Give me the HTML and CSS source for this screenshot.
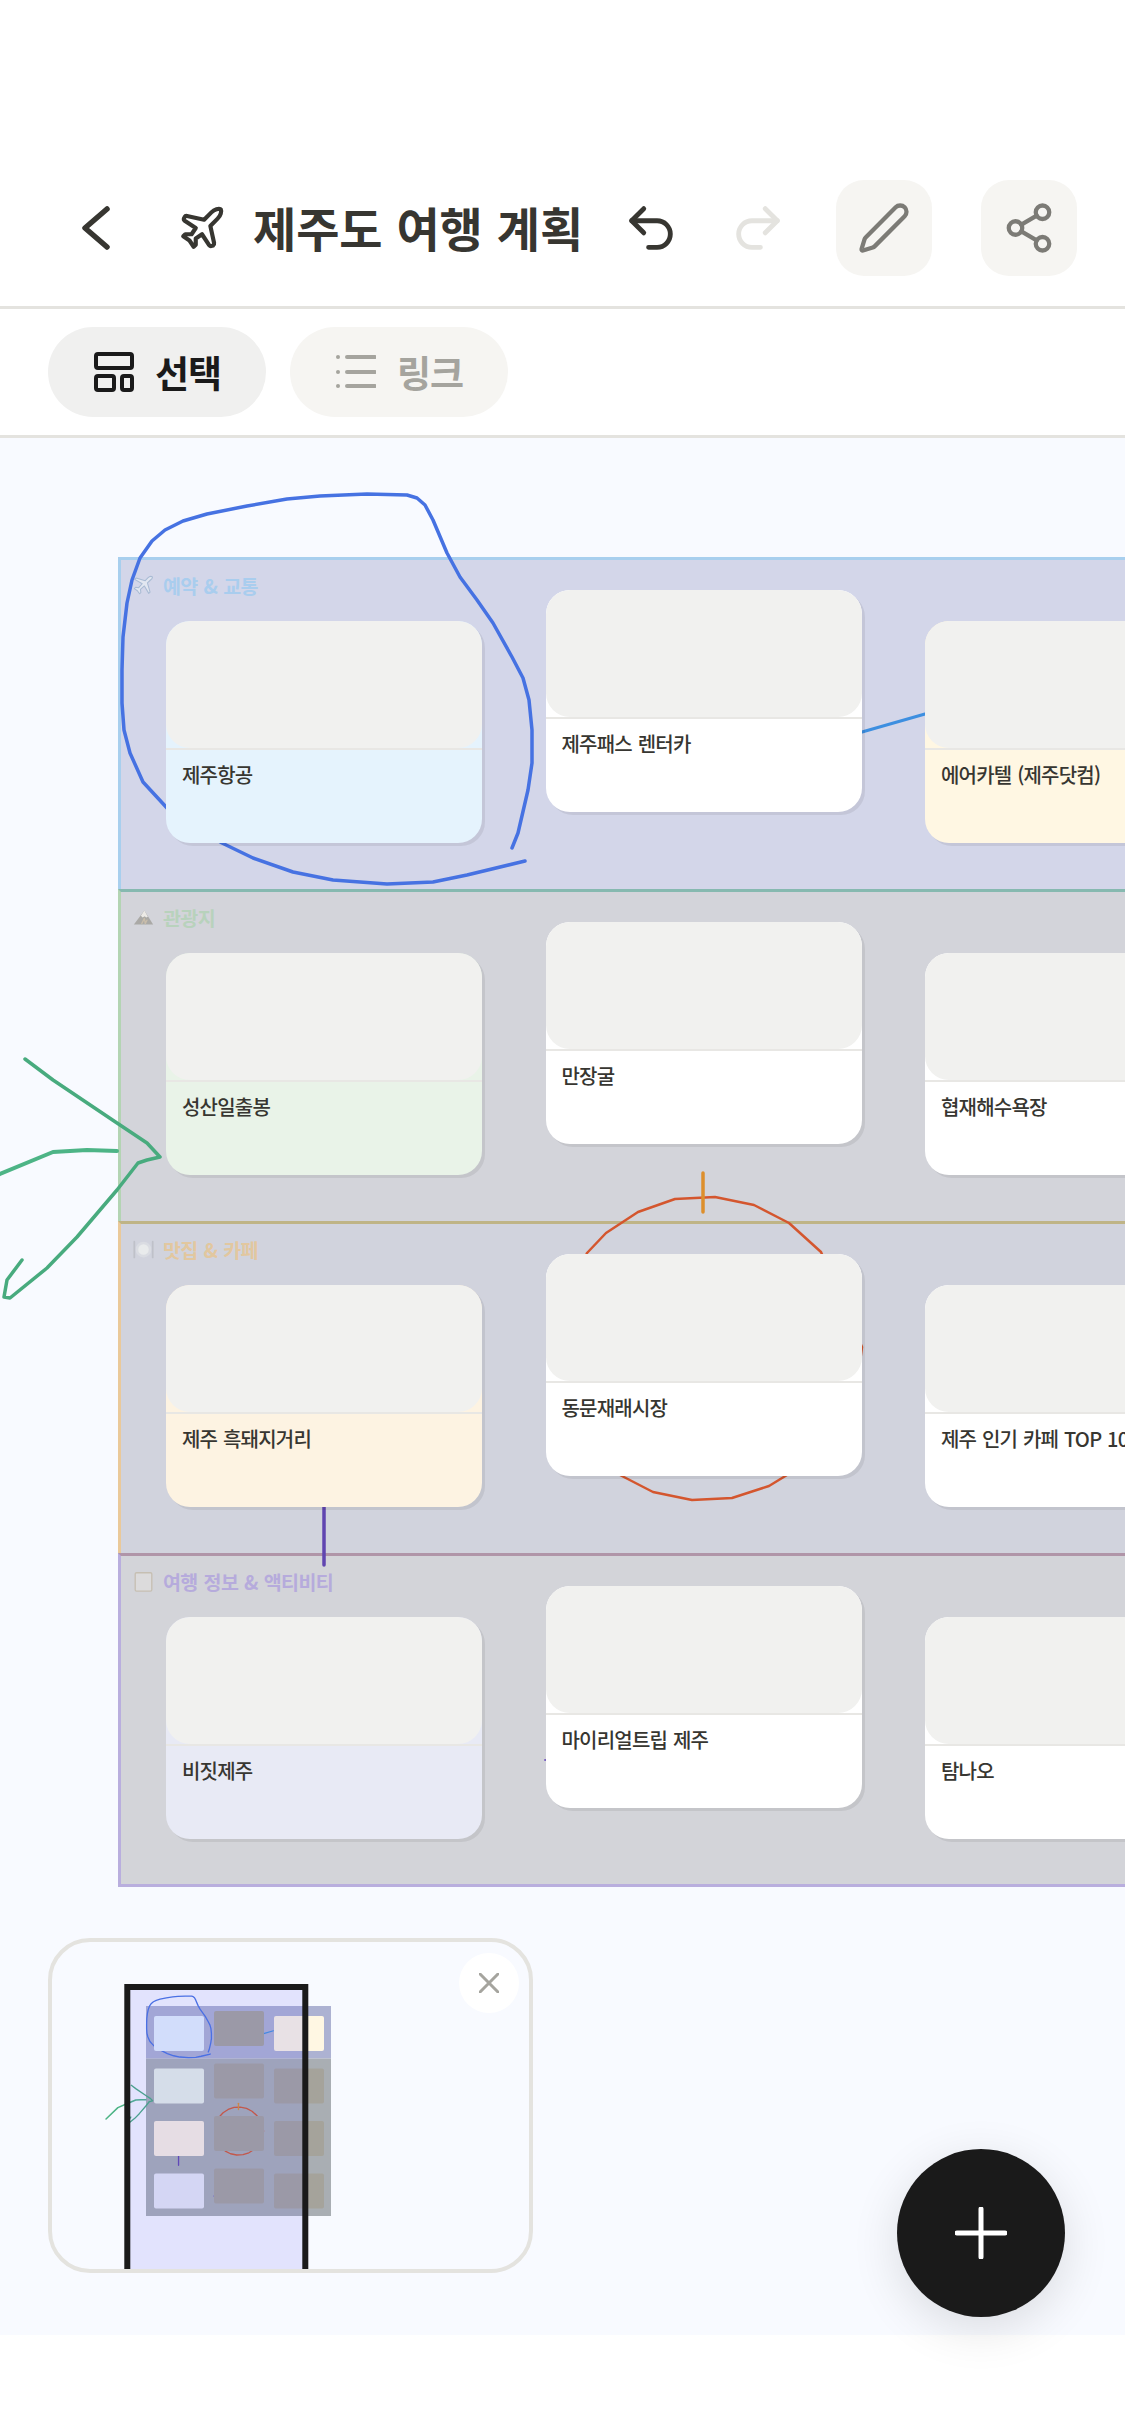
FILE: index.html
```html
<!DOCTYPE html>
<html lang="ko">
<head>
    <meta charset="UTF-8">
    <meta name="viewport" content="width=device-width, initial-scale=1.0">
    <title>제주도 여행 계획</title>
    <link rel="stylesheet" href="styles.css">
</head>
<body>
    <div class="page">
        <header class="topbar">
            <svg class="icon-back" viewBox="0 0 46 58"><path d="M34 10 12 29l22 19"/></svg>
            <svg class="icon-plane" viewBox="0 0 24 24"><path d="M17.8 19.2 16 11l3.5-3.5C21 6 21.5 4 21 3c-1-.5-3 0-4.5 1.5L13 8 4.8 6.2c-.5-.1-.9.1-1.1.5l-.3.5c-.2.5-.1 1 .3 1.3L9 12l-2 3H4l-1 1 3 2 2 3 1-1v-3l3-2 3.5 5.3c.3.4.8.5 1.3.3l.5-.2c.4-.3.6-.7.5-1.2z"/></svg>
            <h1 class="title">제주도 여행 계획</h1>
            <div class="topbar-actions">
                <svg class="icon-history" viewBox="0 0 24 24"><path d="M9 14 4 9l5-5"/><path d="M4 9h10.5a5.5 5.5 0 0 1 0 11H11"/></svg>
                <svg class="icon-history is-off" viewBox="0 0 24 24"><path d="m15 14 5-5-5-5"/><path d="M20 9H9.5a5.5 5.5 0 0 0 0 11H13"/></svg>
                <button class="square-btn">
                    <svg viewBox="0 0 24 24"><path d="M21.174 6.812a1 1 0 0 0-3.986-3.987L3.842 16.174a2 2 0 0 0-.5.83l-1.321 4.352a.5.5 0 0 0 .623.622l4.353-1.32a2 2 0 0 0 .83-.497z"/></svg>
                </button>
                <button class="square-btn">
                    <svg viewBox="0 0 24 24"><circle cx="18" cy="5" r="3"/><circle cx="6" cy="12" r="3"/><circle cx="18" cy="19" r="3"/><path d="M8.59 13.51 15.42 17.49"/><path d="M15.41 6.51 8.59 10.49"/></svg>
                </button>
            </div>
        </header>

        <nav class="tabs">
            <button class="tab is-active">
                <svg viewBox="0 0 24 24"><rect x="3" y="3" width="18" height="7" rx="1"/><rect x="3" y="14" width="9" height="7" rx="1"/><rect x="16" y="14" width="5" height="7" rx="1"/></svg>
                선택
            </button>
            <button class="tab">
                <svg viewBox="0 0 40 40"><path class="list-lines" d="M11 5h28M11 20h28M11 34h28"/><circle cx="2" cy="5" r="2"/><circle cx="2" cy="20" r="2"/><circle cx="2" cy="34" r="2"/></svg>
                링크
            </button>
        </nav>

        <main class="canvas">
            <!-- hand drawn strokes, page coordinates -->
            <svg class="ink" viewBox="0 438 1125 1897">
                <g id="ink-strokes">
                    <polyline class="stroke-link" points="862,732 925,714"/>
                    <polyline class="stroke-purple" points="324,1507 324,1565"/>
                    <polyline class="stroke-purple-thin" points="545,1760 860,1760"/>
                    <polyline class="stroke-blue" points="512,848 518,833 528,790 532,763 532,730 529,700 523,678 512,657 493,623 477,600 460,577 447,553 433,520 425,505 417,498 407,495 367,494 320,496 287,499 247,506 207,514 183,521 165,530 152,541 140,558 132,580 127,603 123,637 122,670 122,703 124,730 130,753 143,782 155,795 167,808 222,843 253,858 293,872 333,880 387,884 433,882 467,875 525,861"/>
                    <polygon class="stroke-red" points="675,1199 715,1197 754,1205 789,1223 821,1252 862,1347 855,1400 787,1475 769,1486 732,1498 692,1500 653,1492 620,1475 570,1400 560,1320 587,1253 606,1233 638,1212"/>
                    <polyline class="stroke-orange" points="703,1173 703,1212"/>
                    <polyline class="stroke-green" points="25,1059 53,1080 117,1123 147,1143 160,1157 147,1160 138,1163 117,1190 77,1237 47,1268 10,1298 4,1297 7,1280 22,1260"/>
                    <polyline class="stroke-green-wide" points="-135,1272 -60,1200 0,1174 53,1152 87,1150 117,1151"/>
                </g>
            </svg>

            <div class="board">
                <section class="group group-blue">
                    <div class="group-label">
                        <svg viewBox="0 0 24 24"><path class="emoji-plane" d="M22 2c-1.500-.8-3.500-.2-5 1.300L14 6.500 3.500 3.500 2 5l8.500 5-4 4.500-3.500-.5L1.500 15.500 5 18l2.500 3.500L9 20l-.5-3.500 4.500-4 5 8.500 1.500-1.500-3-10.500 3.200-3C21.200 5 22.800 3.500 22 2z"/></svg>
                        예약 &amp; 교통
                    </div>
                    <article class="card card-sky"><div class="card-thumb"></div><div class="card-name">제주항공</div></article>
                    <article class="card card-raised"><div class="card-thumb"></div><div class="card-name">제주패스 렌터카</div></article>
                    <article class="card card-cream"><div class="card-thumb"></div><div class="card-name">에어카텔 (제주닷컴)</div></article>
                </section>

                <section class="group group-green">
                    <div class="group-label">
                        <svg viewBox="0 0 24 24"><path class="emoji-rock" d="M1 20 13 4l10 16z"/><path class="emoji-snow" d="M9 10l4-6 4 7-2 1-1.500-1.500L11 12z"/><path class="emoji-crack" d="M10 19l3-6 1 6 2-4"/></svg>
                        관광지
                    </div>
                    <article class="card card-mint"><div class="card-thumb"></div><div class="card-name">성산일출봉</div></article>
                    <article class="card card-raised"><div class="card-thumb"></div><div class="card-name">만장굴</div></article>
                    <article class="card"><div class="card-thumb"></div><div class="card-name">협재해수욕장</div></article>
                </section>

                <section class="group group-orange">
                    <div class="group-label">
                        <svg viewBox="0 0 24 24"><circle class="emoji-plate" cx="12" cy="12" r="7.500"/><path class="emoji-cutlery" d="M1.500 3v18M22.500 3v18"/></svg>
                        맛집 &amp; 카페
                    </div>
                    <article class="card card-peach"><div class="card-thumb"></div><div class="card-name">제주 흑돼지거리</div></article>
                    <article class="card card-raised"><div class="card-thumb"></div><div class="card-name">동문재래시장</div></article>
                    <article class="card"><div class="card-thumb"></div><div class="card-name">제주 인기 카페 TOP 10</div></article>
                </section>

                <section class="group group-purple">
                    <div class="group-label">
                        <svg viewBox="0 0 24 24"><rect class="emoji-note" x="2.500" y="2" width="19" height="21" rx="1.500"/></svg>
                        여행 정보 &amp; 액티비티
                    </div>
                    <article class="card card-lavender"><div class="card-thumb"></div><div class="card-name">비짓제주</div></article>
                    <article class="card card-raised"><div class="card-thumb"></div><div class="card-name">마이리얼트립 제주</div></article>
                    <article class="card"><div class="card-thumb"></div><div class="card-name">탐나오</div></article>
                </section>
            </div>

            <aside class="minimap">
                <svg viewBox="52 1942 477 327">
                    <rect class="mini-row-blue" x="146" y="2006" width="185" height="52.500"/>
                    <rect class="mini-row" x="146" y="2058.500" width="185" height="157.500"/>
                    <use class="mini-ink" href="#ink-strokes" transform="translate(146 2006) scale(.158) translate(-118 -557)"/>

                    <rect class="mini-card fill-sky" x="154" y="2016" width="50" height="35" rx="2"/>
                    <rect class="mini-card" x="214" y="2011" width="50" height="35" rx="2"/>
                    <rect class="mini-card fill-cream" x="274" y="2016" width="50" height="35" rx="2"/>
                    <rect class="mini-card fill-mint" x="154" y="2068.500" width="50" height="35" rx="2"/>
                    <rect class="mini-card" x="214" y="2063.500" width="50" height="35" rx="2"/>
                    <rect class="mini-card" x="274" y="2068.500" width="50" height="35" rx="2"/>
                    <rect class="mini-card fill-peach" x="154" y="2121" width="50" height="35" rx="2"/>
                    <rect class="mini-card" x="214" y="2116" width="50" height="35" rx="2"/>
                    <rect class="mini-card" x="274" y="2121" width="50" height="35" rx="2"/>
                    <rect class="mini-card fill-lavender" x="154" y="2173.500" width="50" height="35" rx="2"/>
                    <rect class="mini-card" x="214" y="2168.500" width="50" height="35" rx="2"/>
                    <rect class="mini-card" x="274" y="2173.500" width="50" height="35" rx="2"/>

                    <rect class="mini-viewport" x="127.300" y="1987" width="178" height="400"/>
                </svg>
                <button class="minimap-close">
                    <svg viewBox="0 0 20 20"><path d="M1 1l18 18M19 1 1 19"/></svg>
                </button>
            </aside>
        </main>

        <button class="fab">
            <svg viewBox="0 0 52 52"><path d="M26 2v48M2 26h48"/></svg>
        </button>
    </div>
</body>
</html>
```

FILE: styles.css
```css
:root {
    --ink-color: #373631;
    --line-color: #e4e3df;
    --soft-btn: #f6f5f2;
    --muted: #a5a49e;
    --canvas-bg: #f8faff;
}

* {
    box-sizing: border-box;
}

body {
    margin: 0;
    background: #fff;
    font-family: "Noto Sans CJK KR", "Noto Sans", sans-serif;
    color: var(--ink-color);
}

.page {
    position: relative;
    width: 1125px;
    height: 2436px;
    overflow: hidden;
    background: #fff;
}

svg {
    display: block;
    fill: none;
    stroke-linecap: round;
    stroke-linejoin: round;
}

button {
    border: none;
    padding: 0;
    font-family: inherit;
}

/* top bar */
.topbar {
    display: flex;
    align-items: center;
    height: 309px;
    padding: 180px 48px 30px 73px;
    border-bottom: 3px solid var(--line-color);
}

.icon-back {
    width: 46px;
    height: 58px;
    stroke: var(--ink-color);
    stroke-width: 5.5;
}

.icon-plane {
    width: 50px;
    height: 50px;
    margin-left: 58px;
    stroke: var(--ink-color);
    stroke-width: 2;
}

.title {
    margin: 0 0 4px 26px;
    font-size: 47px;
    font-weight: 700;
    line-height: 1;
    letter-spacing: -.1px;
    word-spacing: 1px;
    white-space: nowrap;
}

.topbar-actions {
    display: flex;
    align-items: center;
    gap: 49px;
    margin-left: auto;
}

.icon-history {
    width: 58px;
    height: 58px;
    stroke: var(--ink-color);
    stroke-width: 2;
}

.icon-history.is-off {
    stroke: var(--line-color);
}

.square-btn {
    display: flex;
    align-items: center;
    justify-content: center;
    width: 96px;
    height: 96px;
    border-radius: 28px;
    background: var(--soft-btn);
}

.square-btn svg {
    width: 54px;
    height: 54px;
    stroke: #7c7b76;
    stroke-width: 1.9;
}

/* tabs */
.tabs {
    display: flex;
    gap: 24px;
    height: 129px;
    padding: 18px 48px 0;
    border-bottom: 3px solid var(--line-color);
}

.tab {
    display: flex;
    align-items: center;
    gap: 21px;
    width: 218px;
    height: 90px;
    padding: 0 40px 0 46px;
    border-radius: 45px;
    background: var(--soft-btn);
    color: var(--muted);
    font-size: 37px;
    font-weight: 700;
    letter-spacing: -1px;
}

.tab svg {
    flex: none;
    width: 40px;
    height: 40px;
    fill: var(--muted);
}

.list-lines {
    stroke: var(--muted);
    stroke-width: 4;
}

.tab.is-active {
    background: #f0f0ef;
    color: #1a1a1a;
}

.tab.is-active svg {
    fill: none;
    stroke: #1a1a1a;
    stroke-width: 2;
    transform: scale(1.2);
}

/* canvas */
.canvas {
    position: relative;
    height: 1897px;
    padding: 119px 0 0 118px;
    overflow: hidden;
    background: var(--canvas-bg);
}

.ink {
    position: absolute;
    top: 0;
    left: 0;
    z-index: 1;
    width: 1125px;
    height: 1897px;
}

.stroke-blue {
    stroke: #4672e2;
    stroke-width: calc(3.5px * var(--k, 1));
}

.stroke-link {
    stroke: #3d8fe0;
    stroke-width: calc(3px * var(--k, 1));
}

.stroke-purple {
    stroke: #6045b0;
    stroke-width: calc(3.5px * var(--k, 1));
}

.stroke-purple-thin {
    stroke: #7a62c0;
    stroke-width: calc(2px * var(--k, 1));
}

.stroke-red {
    stroke: #d4562e;
    stroke-width: calc(2.5px * var(--k-red, 1));
}

.stroke-orange {
    stroke: #dd8f2c;
    stroke-width: calc(3.5px * var(--k, 1));
}

.stroke-green {
    stroke: #48ab7e;
    stroke-width: calc(3.5px * var(--k, 1));
}

.stroke-green-wide {
    stroke: #4db486;
    stroke-width: calc(4px * var(--k, 1));
}

.board {
    width: 1171px;
}

.group {
    position: relative;
    display: flex;
    align-items: flex-start;
    gap: 63.5px;
    height: 332px;
    padding: 30px 0 0 45px;
    border-left: 3px solid;
    border-top: 3px solid;
}

.group-blue {
    background: #d3d6e9;
    border-color: #a8cfee;
}

.group-green {
    background: #d3d4da;
    border-top-color: #86b9b0;
    border-left-color: #b3d4b3;
}

.group-orange {
    background: #d1d3dd;
    border-top-color: #bfb486;
    border-left-color: #eac99a;
}

.group-purple {
    height: 334px;
    background: #d3d4d9;
    border-top-color: #b095a8;
    border-left-color: #b9aede;
    border-bottom: 3px solid #b9aede;
}

.group-label {
    position: absolute;
    top: 11px;
    left: 12px;
    display: flex;
    align-items: center;
    gap: 9px;
    height: 28px;
    font-size: 19.5px;
    font-weight: 700;
    letter-spacing: -.6px;
    word-spacing: 1px;
    white-space: nowrap;
}

.group-label svg {
    width: 21px;
    height: 21px;
}

.group-blue .group-label { color: #a9cdee; }
.group-green .group-label { color: #b8d2bc; }
.group-orange .group-label { color: #e2c79f; }
.group-purple .group-label { color: #b6abdc; }

.emoji-plane {
    fill: #e2e7f1;
    stroke: #a9bbd4;
    stroke-width: 1.2;
}

.emoji-rock {
    fill: #aaa9a6;
}

.emoji-snow {
    fill: #eceae6;
}

.emoji-crack {
    stroke: #c9bdaa;
    stroke-width: 1.5;
}

.emoji-plate {
    fill: #e9ebec;
    stroke: #dadce2;
    stroke-width: 3;
}

.emoji-cutlery {
    stroke: #bfc1c9;
    stroke-width: 2;
}

.emoji-note {
    fill: #dcdbdc;
    stroke: #c6bfb2;
    stroke-width: 1.5;
}

.card {
    position: relative;
    z-index: 2;
    flex: none;
    width: 316px;
    height: 222px;
    margin-top: 31px;
    border-radius: 24px;
    overflow: hidden;
    background: #fff;
    box-shadow: 3px 3px 0 rgba(0, 0, 0, .07);
}

.card-raised {
    margin-top: 0;
}

.card-thumb {
    height: 127px;
    border-radius: 24px;
    background: #f1f1ef;
}

.card-name {
    padding: 11px 16px 0;
    border-top: 2px solid #e8e7e4;
    font-size: 20px;
    font-weight: 500;
    line-height: 28px;
    letter-spacing: -.8px;
    word-spacing: 1px;
    white-space: nowrap;
}

.card-sky { background: #e5f3fd; }
.card-cream { background: #fff7e3; }
.card-mint { background: #e9f3e8; }
.card-peach { background: #fdf3e2; }
.card-lavender { background: #e8eaf5; }

/* minimap */
.minimap {
    position: absolute;
    top: 1500px;
    left: 48px;
    z-index: 3;
    width: 485px;
    height: 335px;
    border: 4px solid var(--line-color);
    border-radius: 42px;
    overflow: hidden;
    background: var(--canvas-bg);
}

.minimap > svg {
    width: 477px;
    height: 327px;
}

.mini-row-blue { fill: #adb2d2; }
.mini-row { fill: #a9aeb3; }
.mini-ink { --k: 2.4; --k-red: 3.4; }
.mini-card { fill: #a5a39b; }
.fill-sky { fill: #e5f3fd; }
.fill-cream { fill: #fff7e3; }
.fill-mint { fill: #e9f3e8; }
.fill-peach { fill: #fdf3e2; }
.fill-lavender { fill: #e8eaf5; }

.mini-viewport {
    fill: rgba(99, 102, 241, .15);
    stroke: #1a1a1a;
    stroke-width: 6;
    stroke-linejoin: miter;
}

.minimap-close {
    position: absolute;
    top: 11px;
    right: 10px;
    display: flex;
    align-items: center;
    justify-content: center;
    width: 60px;
    height: 60px;
    border-radius: 50%;
    background: #fff;
}

.minimap-close svg {
    width: 20px;
    height: 20px;
    stroke: var(--muted);
    stroke-width: 3;
}

/* add button */
.fab {
    position: absolute;
    top: 2149px;
    left: 897px;
    z-index: 4;
    display: flex;
    align-items: center;
    justify-content: center;
    width: 168px;
    height: 168px;
    border-radius: 50%;
    background: #1a1a1a;
    box-shadow: 0 12px 48px rgba(0, 0, 0, .12);
}

.fab svg {
    width: 52px;
    height: 52px;
    stroke: #fff;
    stroke-width: 5;
}
```
